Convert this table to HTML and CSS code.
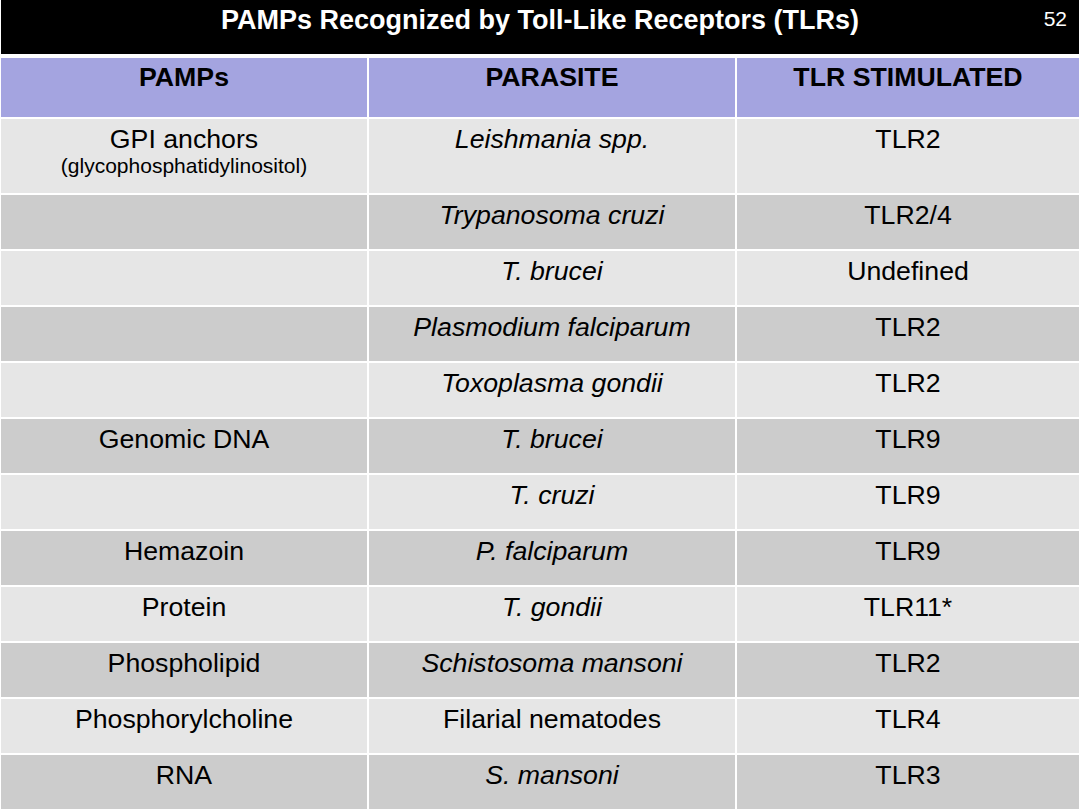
FILE: index.html
```html
<!DOCTYPE html>
<html>
<head>
<meta charset="utf-8">
<link rel="stylesheet" href="styles.css">
</head>
<body>
<div class="slide">
  <div class="titlebar">
    <h1 class="title">PAMPs Recognized by Toll-Like Receptors (TLRs)</h1>
    <span class="pagenum">52</span>
  </div>
  <div class="table">
    <div class="cell head">PAMPs</div>
    <div class="cell head">PARASITE</div>
    <div class="cell head">TLR STIMULATED</div>

    <div class="cell light first">GPI anchors<div class="sub">(glycophosphatidylinositol)</div></div>
    <div class="cell light first"><i>Leishmania spp.</i></div>
    <div class="cell light first">TLR2</div>

    <div class="cell dark"></div>
    <div class="cell dark"><i>Trypanosoma cruzi</i></div>
    <div class="cell dark">TLR2/4</div>

    <div class="cell light"></div>
    <div class="cell light"><i>T. brucei</i></div>
    <div class="cell light">Undefined</div>

    <div class="cell dark"></div>
    <div class="cell dark"><i>Plasmodium falciparum</i></div>
    <div class="cell dark">TLR2</div>

    <div class="cell light"></div>
    <div class="cell light"><i>Toxoplasma gondii</i></div>
    <div class="cell light">TLR2</div>

    <div class="cell dark">Genomic DNA</div>
    <div class="cell dark"><i>T. brucei</i></div>
    <div class="cell dark">TLR9</div>

    <div class="cell light"></div>
    <div class="cell light"><i>T. cruzi</i></div>
    <div class="cell light">TLR9</div>

    <div class="cell dark">Hemazoin</div>
    <div class="cell dark"><i>P. falciparum</i></div>
    <div class="cell dark">TLR9</div>

    <div class="cell light">Protein</div>
    <div class="cell light"><i>T. gondii</i></div>
    <div class="cell light">TLR11*</div>

    <div class="cell dark">Phospholipid</div>
    <div class="cell dark"><i>Schistosoma mansoni</i></div>
    <div class="cell dark">TLR2</div>

    <div class="cell light">Phosphorylcholine</div>
    <div class="cell light">Filarial nematodes</div>
    <div class="cell light">TLR4</div>

    <div class="cell dark">RNA</div>
    <div class="cell dark"><i>S. mansoni</i></div>
    <div class="cell dark">TLR3</div>
  </div>
</div>
</body>
</html>
```

FILE: styles.css
```css
html, body {
  margin: 0;
  padding: 0;
  background: #ffffff;
}

body {
  width: 1080px;
  height: 810px;
  overflow: hidden;
  font-family: "Liberation Sans", Arial, sans-serif;
  color: #000000;
}

.slide {
  display: flex;
  flex-direction: column;
  gap: 4px;
  padding: 0 1px;
}

.titlebar {
  position: relative;
  height: 54px;
  background: #000000;
  color: #ffffff;
  display: flex;
  justify-content: center;
  align-items: flex-start;
}

.title {
  margin: 0;
  padding-top: 5px;
  font-size: 27px;
  font-weight: bold;
  line-height: 30px;
}

.pagenum {
  position: absolute;
  right: 12px;
  top: 7px;
  font-size: 21px;
  line-height: 24px;
}

.table {
  display: grid;
  grid-template-columns: 366px 366px 1fr;
  grid-template-rows: 59px 74px repeat(11, 54px);
  gap: 2px;
  background: #ffffff;
}

.cell {
  text-align: center;
  font-size: 26.7px;
  line-height: 31px;
  padding-top: 5px;
  box-sizing: border-box;
}

.cell i {
  font-style: italic;
}

.head {
  background: #a4a4e0;
  font-weight: bold;
  padding-top: 4px;
}

.light {
  background: #e6e6e6;
}

.dark {
  background: #cccccc;
}

.sub {
  font-size: 21px;
  line-height: 22px;
}
```
